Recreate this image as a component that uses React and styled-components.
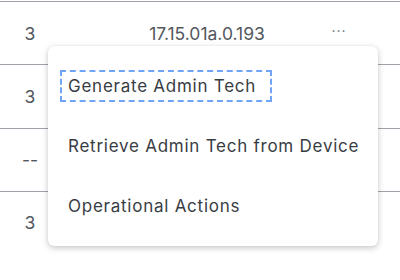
import React from 'react';
import styled, { createGlobalStyle } from 'styled-components';

const GlobalStyle = createGlobalStyle`
  body {
    margin: 0;
    padding-top: 1px;
    background: #fff;
    font-family: Inter, "Noto Sans", sans-serif;
  }
`;

const Table = styled.div`
  position: relative;
  width: 400px;
`;

const Row = styled.div`
  display: grid;
  grid-template-columns: 60px 254px 50px 1fr;
  align-items: center;
  height: 63.25px;
  box-sizing: border-box;
  border-top: 1px solid #9ea3a9;
  &:last-child {
    border-bottom: 1px solid #9ea3a9;
  }
`;

const Cell = styled.div`
  text-align: center;
  font-size: 17.5px;
  color: #53585e;
  padding-left: ${p => p.$pad || 0}px;
`;

const Dots = styled.span`
  font-size: 14px;
  color: #6b7077;
  letter-spacing: 1px;
  position: relative;
  top: -4px;
`;

const Menu = styled.ul`
  position: absolute;
  left: 48px;
  top: 45px;
  width: 330px;
  margin: 0;
  padding: 10px 0;
  list-style: none;
  background: #fff;
  border-radius: 6px;
  box-shadow: 0 2px 6px rgba(0, 0, 0, 0.22), 0 0 1px rgba(0, 0, 0, 0.12);
`;

const Item = styled.li`
  height: 60px;
  display: flex;
  align-items: center;
  padding-left: 20px;
  font-size: 17px;
  letter-spacing: 0.75px;
  color: #383d43;
`;

const Focused = styled.span`
  margin-left: -7px;
  padding: 5px 15px 5px 7px;
  outline: 2px dashed #6fa4f7;
  outline-offset: -1px;
`;

const rows = ['3', '3', '--', '3'];

function App() {
  return (
    <>
      <GlobalStyle />
      <Table>
        {rows.map((v, i) => (
          <Row key={i}>
            <Cell>{v}</Cell>
            <Cell $pad={40}>{i === 0 ? '17.15.01a.0.193' : ''}</Cell>
            <Cell>{i === 0 && <Dots>···</Dots>}</Cell>
            <Cell />
          </Row>
        ))}
        <Menu>
          <Item>
            <Focused>Generate Admin Tech</Focused>
          </Item>
          <Item>Retrieve Admin Tech from Device</Item>
          <Item>Operational Actions</Item>
        </Menu>
      </Table>
    </>
  );
}

export default App;
